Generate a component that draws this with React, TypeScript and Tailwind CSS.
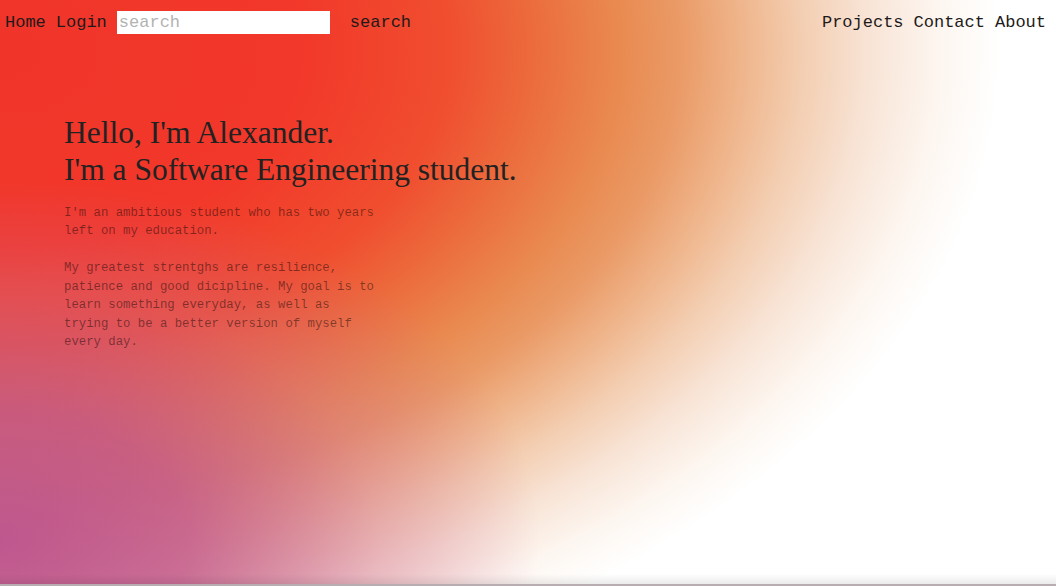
import React from "react";

const mono = "font-['Courier_New','Liberation_Mono',monospace]";
const serif = "font-['Times_New_Roman','Liberation_Serif',serif]";

function NavBar() {
  const [query, setQuery] = React.useState("");

  return (
    <nav className={`flex items-center justify-between pl-[5px] pr-[10px] pt-[10px] text-[17px] text-[#1e1a1a] ${mono}`}>
      <div className="flex items-center">
        <a href="#" className="mr-[10px]">Home</a>
        <a href="#">Login</a>
        <input
          value={query}
          onChange={(e) => setQuery(e.target.value)}
          placeholder="search"
          className={`ml-[10px] h-[23px] w-[213px] bg-white px-[2px] text-[17px] outline-none placeholder:text-[#b3b3b3] ${mono}`}
        />
        <button className={`ml-[20px] text-[17px] ${mono}`}>search</button>
      </div>
      <div className="flex items-center gap-[10px]">
        <a href="#">Projects</a>
        <a href="#">Contact</a>
        <a href="#">About</a>
      </div>
    </nav>
  );
}

export default function App() {
  return (
    <div className="relative flex h-[586px] w-[1056px] flex-col overflow-hidden bg-white bg-[radial-gradient(ellipse_540px_360px_at_0px_540px,rgba(188,82,142,0.95)_0%,rgba(192,84,140,0.8)_35%,rgba(205,100,145,0.35)_70%,rgba(220,130,160,0)_100%),radial-gradient(ellipse_1000px_660px_at_0px_50px,#f0342a_0%,#f2382a_30%,#f04e2f_45%,#ec6a3c_53%,#e98a50_62%,#ea9a66_68%,#efb48a_74%,#f3cdb0_80%,#f8e4d6_87%,#fdf6f0_94%,#ffffff_100%)]">
      <NavBar />

      <main className="flex-1 pl-[64px] pt-[78px]">
        <h1 className={`text-[31.5px] leading-[37px] text-[#222] ${serif}`}>
          Hello, I'm Alexander.
          <br />
          I'm a Software Engineering student.
        </h1>

        <div className={`mt-[16px] w-[314px] text-[12.3px] leading-[18.5px] text-black/45 ${mono}`}>
          <p>I'm an ambitious student who has two years left on my education.</p>
          <p className="mt-[18.5px]">
            My greatest strentghs are resilience, patience and good dicipline. My goal is to learn something everyday, as well as trying to be a better version of myself every day.
          </p>
        </div>
      </main>

      {/* soft shadow along the bottom edge */}
      <div className="h-[10px] bg-gradient-to-b from-transparent to-black/8" />
      <div className="h-[2px] bg-[#b8aeb2]" />
    </div>
  );
}
